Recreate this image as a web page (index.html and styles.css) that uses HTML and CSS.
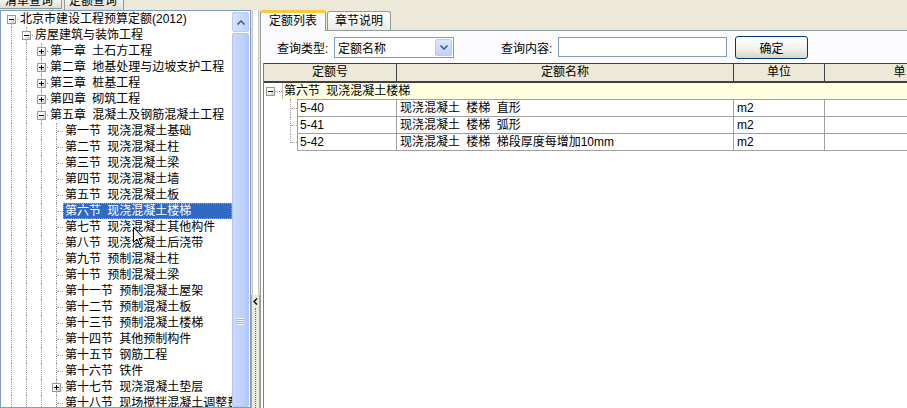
FILE: index.html
```html
<!DOCTYPE html>
<html>
<head>
    <title>定额查询</title>
    <link rel="stylesheet" href="styles.css">
</head>
<body>
    <div class="left">
        <div class="ltabs">
            <div class="ltab">清单查询</div>
            <div class="ltab active">定额查询</div>
        </div>
        <div class="treebox">
            <div class="tree">
                <div class="node"><i class="br first"><b class="box"></b></i><span class="lbl">北京市建设工程预算定额(2012)</span></div>
                <div class="node"><i class="ln"></i><i class="br"><b class="box"></b></i><span class="lbl">房屋建筑与装饰工程</span></div>
                <div class="node"><i class="ln"></i><i class="ln"></i><i class="br"><b class="box plus"></b></i><span class="lbl">第一章 土石方工程</span></div>
                <div class="node"><i class="ln"></i><i class="ln"></i><i class="br"><b class="box plus"></b></i><span class="lbl">第二章 地基处理与边坡支护工程</span></div>
                <div class="node"><i class="ln"></i><i class="ln"></i><i class="br"><b class="box plus"></b></i><span class="lbl">第三章 桩基工程</span></div>
                <div class="node"><i class="ln"></i><i class="ln"></i><i class="br"><b class="box plus"></b></i><span class="lbl">第四章 砌筑工程</span></div>
                <div class="node"><i class="ln"></i><i class="ln"></i><i class="br"><b class="box"></b></i><span class="lbl">第五章 混凝土及钢筋混凝土工程</span></div>
                <div class="node"><i class="ln"></i><i class="ln"></i><i class="ln"></i><i class="br"></i><span class="lbl">第一节 现浇混凝土基础</span></div>
                <div class="node"><i class="ln"></i><i class="ln"></i><i class="ln"></i><i class="br"></i><span class="lbl">第二节 现浇混凝土柱</span></div>
                <div class="node"><i class="ln"></i><i class="ln"></i><i class="ln"></i><i class="br"></i><span class="lbl">第三节 现浇混凝土梁</span></div>
                <div class="node"><i class="ln"></i><i class="ln"></i><i class="ln"></i><i class="br"></i><span class="lbl">第四节 现浇混凝土墙</span></div>
                <div class="node"><i class="ln"></i><i class="ln"></i><i class="ln"></i><i class="br"></i><span class="lbl">第五节 现浇混凝土板</span></div>
                <div class="node"><i class="ln"></i><i class="ln"></i><i class="ln"></i><i class="br"></i><span class="lbl selected">第六节 现浇混凝土楼梯</span></div>
                <div class="node"><i class="ln"></i><i class="ln"></i><i class="ln"></i><i class="br"></i><span class="lbl">第七节 现浇混凝土其他构件</span></div>
                <div class="node"><i class="ln"></i><i class="ln"></i><i class="ln"></i><i class="br"></i><span class="lbl">第八节 现浇混凝土后浇带</span></div>
                <div class="node"><i class="ln"></i><i class="ln"></i><i class="ln"></i><i class="br"></i><span class="lbl">第九节 预制混凝土柱</span></div>
                <div class="node"><i class="ln"></i><i class="ln"></i><i class="ln"></i><i class="br"></i><span class="lbl">第十节 预制混凝土梁</span></div>
                <div class="node"><i class="ln"></i><i class="ln"></i><i class="ln"></i><i class="br"></i><span class="lbl">第十一节 预制混凝土屋架</span></div>
                <div class="node"><i class="ln"></i><i class="ln"></i><i class="ln"></i><i class="br"></i><span class="lbl">第十二节 预制混凝土板</span></div>
                <div class="node"><i class="ln"></i><i class="ln"></i><i class="ln"></i><i class="br"></i><span class="lbl">第十三节 预制混凝土楼梯</span></div>
                <div class="node"><i class="ln"></i><i class="ln"></i><i class="ln"></i><i class="br"></i><span class="lbl">第十四节 其他预制构件</span></div>
                <div class="node"><i class="ln"></i><i class="ln"></i><i class="ln"></i><i class="br"></i><span class="lbl">第十五节 钢筋工程</span></div>
                <div class="node"><i class="ln"></i><i class="ln"></i><i class="ln"></i><i class="br"></i><span class="lbl">第十六节 铁件</span></div>
                <div class="node"><i class="ln"></i><i class="ln"></i><i class="ln"></i><i class="br"><b class="box plus"></b></i><span class="lbl">第十七节 现浇混凝土垫层</span></div>
                <div class="node"><i class="ln"></i><i class="ln"></i><i class="ln"></i><i class="br"></i><span class="lbl">第十八节 现场搅拌混凝土调整费</span></div>
            </div>
            <div class="vscroll">
                <div class="sbtn">
                    <svg width="8" height="5" viewBox="0 0 8 5"><path d="M0.5 4.5 L4 1 L7.5 4.5" fill="none" stroke="#4d6185" stroke-width="1.6"/></svg>
                </div>
                <div class="thumb"><div class="grip"></div></div>
            </div>
        </div>
    </div>

    <div class="split">
        <div class="split-top"></div>
        <div class="split-btn">
            <svg width="5" height="7" viewBox="0 0 5 7"><path d="M4 0.5 L1 3.5 L4 6.5" fill="none" stroke="#000" stroke-width="1.4"/></svg>
            <div class="split-dots"></div>
        </div>
    </div>

    <div class="right">
        <div class="rtabs">
            <div class="rtab active">定额列表</div>
            <div class="rtab">章节说明</div>
        </div>
        <div class="pane">
            <div class="query">
                <span class="qlabel">查询类型:</span>
                <div class="combo">
                    <span class="combo-text">定额名称</span>
                    <span class="combo-btn">
                        <svg width="8" height="5" viewBox="0 0 8 5"><path d="M0.5 0.5 L4 4 L7.5 0.5" fill="none" stroke="#4d6185" stroke-width="1.6"/></svg>
                    </span>
                </div>
                <span class="qlabel second">查询内容:</span>
                <div class="textbox"></div>
                <button class="okbtn">确定</button>
            </div>

            <div class="grid">
                <div class="thead">
                    <div class="th c1">定额号</div>
                    <div class="th c2">定额名称</div>
                    <div class="th c3">单位</div>
                    <div class="th c4">单</div>
                </div>
                <div class="group">
                    <div class="group-gut"><b class="box"></b></div>
                    <div class="group-text">第六节 现浇混凝土楼梯</div>
                </div>
                <div class="drow">
                    <div class="gut"></div>
                    <div class="td c1">5-40</div>
                    <div class="td c2">现浇混凝土 楼梯 直形</div>
                    <div class="td c3">m2</div>
                    <div class="td c4"></div>
                </div>
                <div class="drow">
                    <div class="gut"></div>
                    <div class="td c1">5-41</div>
                    <div class="td c2">现浇混凝土 楼梯 弧形</div>
                    <div class="td c3">m2</div>
                    <div class="td c4"></div>
                </div>
                <div class="drow">
                    <div class="gut last"></div>
                    <div class="td c1">5-42</div>
                    <div class="td c2">现浇混凝土 楼梯 梯段厚度每增加10mm</div>
                    <div class="td c3">m2</div>
                    <div class="td c4"></div>
                </div>
            </div>
        </div>
    </div>

    <svg class="cursor" width="12" height="19" viewBox="0 0 12 19"><path d="M0.5 0.5 L0.5 15.5 L4 12 L6.5 18 L8.5 17 L6 11.5 L11 11.5 Z" fill="#fff" stroke="#000" stroke-width="1"/></svg>
</body>
</html>
```

FILE: styles.css
```css
body {
    margin: 0;
    height: 408px;
    overflow: hidden;
    display: flex;
    background-color: #ece9d8;
    font-family: "Liberation Sans", "Noto Sans CJK SC", sans-serif;
    font-size: 12px;
    color: #000;
    word-spacing: 3px;
}

/* left side */

.left {
    width: 251px;
    flex: none;
    display: flex;
    flex-direction: column;
}

.ltabs {
    height: 10px;
    display: flex;
    overflow: hidden;
}

.ltab {
    width: 62px;
    height: 9px;
    line-height: 2px;
    padding-left: 5px;
    box-sizing: border-box;
    overflow: hidden;
    background: linear-gradient(#f4f3ee, #e0ded3);
    border-right: 1px solid #919b9c;
    border-bottom: 1px solid #919b9c;
}

.ltab.active {
    width: 60px;
    height: 10px;
    margin-left: 2px;
    padding-left: 4px;
    background-color: #fcfcfe;
    border-left: 1px solid #919b9c;
    border-bottom: none;
}

.treebox {
    flex: 1;
    display: flex;
    background-color: #fff;
    border: 1px solid #7f9db9;
    overflow: hidden;
}

.tree {
    flex: 1;
    padding-left: 6px;
    overflow: hidden;
}

.node {
    display: flex;
    height: 16px;
    line-height: 16px;
    white-space: nowrap;
}

.node i {
    flex: none;
    position: relative;
    height: 16px;
}

.ln {
    width: 15px;
}

.ln::before,
.br::before {
    content: "";
    position: absolute;
    left: 4px;
    top: 0;
    bottom: 0;
    border-left: 1px dotted #a0a0a0;
}

.br {
    width: 11px;
}

.br.first::before {
    top: 8px;
}

.br::after {
    content: "";
    position: absolute;
    left: 5px;
    right: 0;
    top: 8px;
    border-top: 1px dotted #a0a0a0;
}

.box {
    position: absolute;
    left: 0;
    top: 4px;
    width: 7px;
    height: 7px;
    border: 1px solid #919b9c;
    background: linear-gradient(135deg, #ffffff 40%, #c6c2b4);
    z-index: 1;
}

.box::before {
    content: "";
    position: absolute;
    left: 1px;
    top: 3px;
    width: 5px;
    height: 1px;
    background-color: #000;
}

.box.plus::after {
    content: "";
    position: absolute;
    left: 3px;
    top: 1px;
    width: 1px;
    height: 5px;
    background-color: #000;
}

.lbl {
    flex: 1;
    padding-left: 2px;
    overflow: hidden;
}

.lbl.selected {
    background-color: #316ac5;
    color: #fff;
    outline: 1px dotted #8fa9e0;
    outline-offset: -1px;
}

.vscroll {
    width: 17px;
    margin-right: 1px;
    padding-top: 1px;
    display: flex;
    flex-direction: column;
    background-color: #fdfdfa;
}

.sbtn {
    height: 18px;
    display: flex;
    align-items: center;
    justify-content: center;
    border: 1px solid #bccbf2;
    border-radius: 2px;
    background: linear-gradient(to right, #d6e2fe, #c1d3fb);
}

.thumb {
    flex: 1;
    margin-top: 1px;
    border: 1px solid #b3c6f4;
    border-radius: 2px;
    background: linear-gradient(to right, #cad9fd, #bcd0fa 70%, #b2c7f7);
}

.grip {
    width: 7px;
    height: 7px;
    margin: 284px auto 0;
    background: repeating-linear-gradient(#eef3fe 0, #eef3fe 1px, #9bb1e6 1px, #9bb1e6 2px);
}

/* splitter */

.split {
    width: 9px;
    flex: none;
    display: flex;
    flex-direction: column;
    padding-top: 10px;
}

.split-top {
    height: 285px;
    margin: 0 1px;
    background-color: #fff;
    border-left: 1px solid #c8c5b8;
    border-right: 1px solid #c8c5b8;
}

.split-btn {
    flex: 1;
    display: flex;
    flex-direction: column;
    align-items: center;
    padding-top: 3px;
    border-left: 1px solid #aca899;
    border-right: 1px solid #aca899;
}

.split-dots {
    flex: 1;
    margin-top: 3px;
    border-left: 1px dotted #716f64;
}

/* right side */

.right {
    flex: 1;
    display: flex;
    flex-direction: column;
    overflow: hidden;
}

.rtabs {
    height: 30px;
    display: flex;
    align-items: flex-end;
}

.rtab {
    height: 18px;
    line-height: 18px;
    padding: 0 7px;
    margin-left: 1px;
    background: linear-gradient(#ffffff, #ecebe5);
    border: 1px solid #919b9c;
    border-bottom: none;
    border-radius: 3px 3px 0 0;
}

.rtab.active {
    height: 18px;
    line-height: 17px;
    margin-left: 0;
    margin-bottom: -1px;
    padding: 0 8px;
    background: #fcfcfe;
    border-top: 3px solid #ffc83c;
    position: relative;
    z-index: 1;
}

.pane {
    flex: 1;
    display: flex;
    flex-direction: column;
    background-color: #fcfcfe;
    border-top: 1px solid #919b9c;
    border-left: 1px solid #919b9c;
}

.query {
    height: 32px;
    display: flex;
    align-items: center;
    padding-left: 16px;
    flex: none;
}

.qlabel {
    width: 57px;
    flex: none;
}

.qlabel.second {
    margin-left: 47px;
}

.combo {
    width: 120px;
    height: 21px;
    box-sizing: border-box;
    display: flex;
    align-items: center;
    background-color: #fff;
    border: 1px solid #7f9db9;
}

.combo-text {
    flex: 1;
    padding-left: 3px;
}

.combo-btn {
    width: 17px;
    height: 17px;
    margin-right: 1px;
    display: flex;
    align-items: center;
    justify-content: center;
    box-sizing: border-box;
    border: 1px solid #bccbf2;
    border-radius: 2px;
    background: linear-gradient(#dde7fe, #bfd1fb);
}

.textbox {
    width: 169px;
    height: 20px;
    box-sizing: border-box;
    background-color: #fff;
    border: 1px solid #7f9db9;
}

.okbtn {
    width: 73px;
    height: 23px;
    margin-left: 8px;
    font-family: inherit;
    font-size: 12px;
    color: #000;
    border: 1px solid #003c74;
    border-radius: 3px;
    background: linear-gradient(#ffffff, #f0f0ea 60%, #d8d4c6);
    padding: 0;
}

.grid {
    flex: 1;
    margin-left: 2px;
    border-left: 1px solid #808080;
    background-color: #fff;
}

.thead {
    display: flex;
    height: 17px;
    line-height: 17px;
    background-color: #ece9d8;
    border-top: 1px solid #404040;
    border-bottom: 2px solid #404040;
}

.th {
    flex: none;
    box-sizing: border-box;
    text-align: center;
    border-right: 1px solid #404040;
}

.th.c1 { width: 133px; }
.th.c2 { width: 337px; }
.th.c3 { width: 91px; }
.th.c4 { width: 150px; }

.group {
    display: flex;
    height: 16px;
    line-height: 16px;
}

.group-gut {
    width: 18px;
    flex: none;
    position: relative;
}

.group-gut .box {
    left: 2px;
    top: 4px;
}

.group-gut::after {
    content: "";
    position: absolute;
    left: 11px;
    right: 0;
    top: 8px;
    border-top: 1px dotted #a0a0a0;
}

.group-text {
    flex: 1;
    padding-left: 1px;
    background-color: #ffffe1;
    border-left: 1px solid #c0c0c0;
}

.drow {
    display: flex;
    height: 17px;
    line-height: 16px;
}

.drow:first-of-type,
.group + .drow {
    height: 18px;
}

.gut {
    width: 33px;
    flex: none;
    position: relative;
}

.gut::before {
    content: "";
    position: absolute;
    left: 26px;
    top: 0;
    bottom: 0;
    border-left: 1px dotted #a0a0a0;
}

.gut.last::before {
    bottom: 8px;
}

.gut::after {
    content: "";
    position: absolute;
    left: 27px;
    right: 0;
    bottom: 8px;
    border-top: 1px dotted #a0a0a0;
}

.td {
    flex: none;
    box-sizing: border-box;
    padding-left: 3px;
    white-space: nowrap;
    border-left: 1px solid #a0a0a0;
    border-bottom: 1px solid #a0a0a0;
}

.group + .drow .td {
    border-top: 1px solid #a0a0a0;
}

.td.c1 { width: 99px; padding-left: 2px; }
.td.c2 { width: 337px; }
.td.c3 { width: 91px; }
.td.c4 { width: 150px; }

.cursor {
    position: absolute;
    left: 133px;
    top: 227px;
}
```
